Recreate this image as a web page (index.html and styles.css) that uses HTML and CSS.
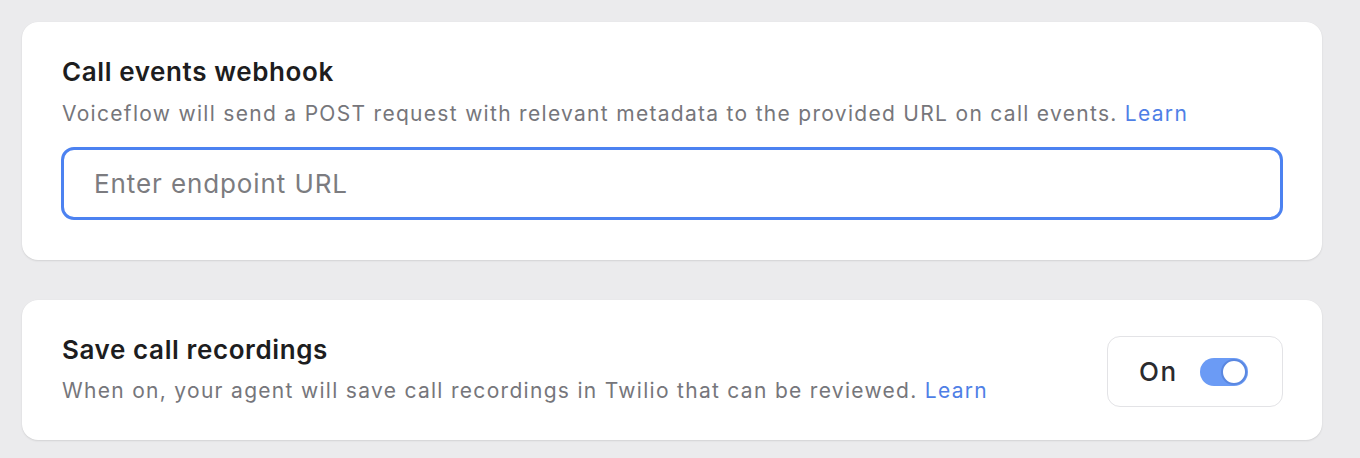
FILE: index.html
```html
<!DOCTYPE html>
<html>
<head>
<meta charset="utf-8">
<link rel="stylesheet" href="styles.css">
</head>
<body>
<div class="page">
  <section class="card card-webhook">
    <h2 class="title">Call events webhook</h2>
    <p class="desc">Voiceflow will send a POST request with relevant metadata to the provided URL on call events. <a class="learn" href="#">Learn</a></p>
    <div class="input">Enter endpoint URL</div>
  </section>
  <section class="card card-rec">
    <div class="rec-text">
      <h2 class="title">Save call recordings</h2>
      <p class="desc">When on, your agent will save call recordings in Twilio that can be reviewed. <a class="learn" href="#">Learn</a></p>
    </div>
    <div class="toggle-box">
      <span class="toggle-label">On</span>
      <span class="switch"><span class="knob"></span></span>
    </div>
  </section>
</div>
</body>
</html>
```
FILE: styles.css
```css
* { box-sizing: border-box; }
html, body { margin: 0; padding: 0; }
body {
  background: #ebebed;
  font-family: Inter, "Noto Sans", sans-serif;
  width: 1360px;
  height: 458px;
  overflow: hidden;
}
.page {
  padding: 22px 38px 0 22px;
  display: flex;
  flex-direction: column;
  gap: 40px;
}
.card {
  background: #fff;
  border-radius: 16px;
  box-shadow: 0 1px 2px rgba(0,0,0,0.10), 0 0 1px rgba(0,0,0,0.06);
  padding: 0 40px;
}
.card-webhook {
  height: 238px;
  padding-top: 34px;
}
.title {
  margin: 0;
  font-size: 26px;
  font-weight: 600;
  color: #1d1d20;
  line-height: 32px;
  letter-spacing: 0.6px;
}
.desc {
  margin: 0;
  font-size: 21px;
  color: #76767b;
  line-height: 26px;
  font-weight: 400;
  letter-spacing: 1.3px;
}
.card-webhook .desc { margin-top: 13px; }
.learn { color: #4f7fe6; text-decoration: none; }
.input {
  margin-top: 20px;
  margin-left: -1px;
  margin-right: -1px;
  height: 73px;
  border: 3px solid #4c82f1;
  border-radius: 13px;
  padding-left: 30px;
  display: flex;
  align-items: center;
  font-size: 26px;
  letter-spacing: 0.9px;
  color: #7c7c80;
}
.card-rec {
  height: 140px;
  display: flex;
  align-items: center;
  justify-content: space-between;
}
.card-rec .desc { margin-top: 12px; }
.rec-text { margin-bottom: 3px; }
.toggle-box {
  width: 176px;
  height: 71px;
  margin-right: -1px;
  border: 1.5px solid #e3e3e6;
  border-radius: 13px;
  display: flex;
  align-items: center;
  padding-left: 31px;
  gap: 22px;
  margin-top: 3px;
}
.toggle-label {
  font-size: 26px;
  font-weight: 500;
  letter-spacing: 1.5px;
  color: #2a2a2e;
}
.switch {
  position: relative;
  width: 48px;
  height: 28px;
  border-radius: 14px;
  background: #6b9bf5;
}
.knob {
  position: absolute;
  top: 1px;
  right: 1px;
  width: 26px;
  height: 26px;
  border-radius: 50%;
  background: #fff;
  border: 2px solid #5a87e0;
}
```
